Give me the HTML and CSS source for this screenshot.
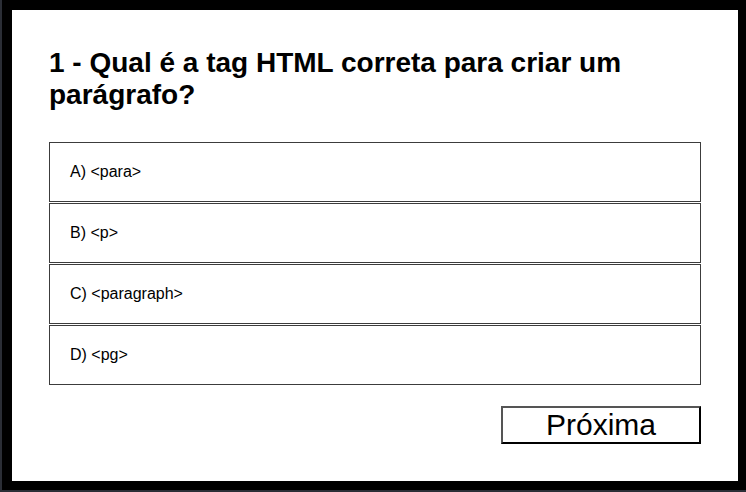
FILE: index.html
```html
<!DOCTYPE html>
<html lang="pt">
<head>
<meta charset="utf-8">
<link rel="stylesheet" href="styles.css">
</head>
<body>
<div class="frame">
  <div class="panel">
    <h1 class="question">1 - Qual é a tag HTML correta para criar um parágrafo?</h1>
    <div class="options">
      <div class="option">A) &lt;para&gt;</div>
      <div class="option">B) &lt;p&gt;</div>
      <div class="option">C) &lt;paragraph&gt;</div>
      <div class="option">D) &lt;pg&gt;</div>
    </div>
    <div class="actions">
      <button class="next">Próxima</button>
    </div>
  </div>
</div>
</body>
</html>
```
FILE: styles.css
```css
html, body {
  margin: 0;
  padding: 0;
  background: #000;
}
body {
  width: 746px;
  height: 492px;
  overflow: hidden;
  font-family: "Liberation Sans", Arial, sans-serif;
  border-left: 2px solid #2b2e36;
  border-bottom: 2px solid #2b2e36;
  box-sizing: border-box;
}
.frame {
  padding: 10px 8px 9px 10px;
  height: 100%;
  box-sizing: border-box;
}
.panel {
  background: #fff;
  height: 100%;
  box-sizing: border-box;
  padding: 37px 37px 0 37px;
}
.question {
  margin: 0 0 31px 0;
  font-size: 28px;
  line-height: 32px;
  font-weight: bold;
  color: #000;
  width: 640px;
}
.options {
  display: flex;
  flex-direction: column;
  gap: 1px;
  width: 652px;
}
.option {
  height: 60px;
  box-sizing: border-box;
  border: 1px solid #3c3c3c;
  display: flex;
  align-items: center;
  padding-left: 20px;
  font-size: 16px;
  color: #000;
}
.actions {
  width: 652px;
  display: flex;
  justify-content: flex-end;
  margin-top: 21px;
}
.next {
  width: 200px;
  height: 38px;
  box-sizing: border-box;
  border: 2px solid;
  border-color: #555 #000 #000 #555;
  background: #fff;
  font-family: "Liberation Sans", Arial, sans-serif;
  font-size: 30px;
  line-height: 1;
  color: #000;
  padding: 0;
}
```
